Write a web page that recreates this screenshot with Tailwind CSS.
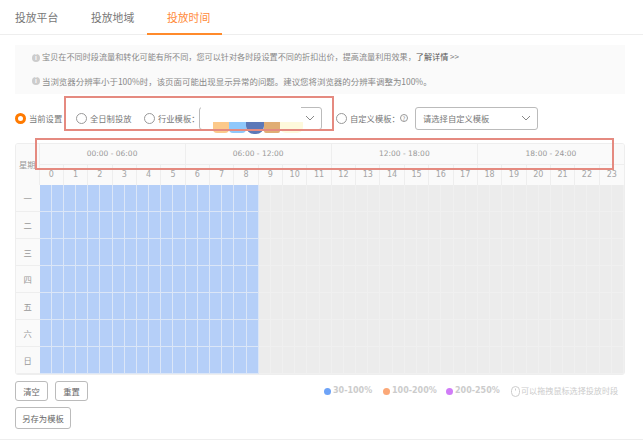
<!DOCTYPE html>
<html lang="zh">

<head>
  <meta charset="utf-8">
  <script src="https://cdn.jsdelivr.net/npm/@tailwindcss/browser@4"></script>
  <title>投放时间</title>
</head>

<body class="bg-white text-[#666] font-['Noto_Sans_CJK_SC','Noto_Sans',sans-serif] text-[8.3px]">
  <div class="relative w-[643px] h-[440px] overflow-hidden border-b border-[#eee] whitespace-nowrap">

    <!-- tabs -->
    <div class="flex h-[35px] pl-[15px] border-b border-[#eee] text-[10.8px] text-[#777]">
      <div class="w-[76px] pt-[9px]">投放平台</div>
      <div class="w-[56px] pt-[9px]">投放地域</div>
      <div class="w-[75px] pl-[20px] pt-[9px] h-[35px] border-b-2 border-[#ff8a2b] text-[#ff8a3a]">投放时间</div>
    </div>

    <!-- notice -->
    <div class="mx-[15px] mt-[10px] h-[49px] w-[610px] bg-[#fafafa] pl-[17px] text-[#888]">
      <div class="flex items-center h-[24px] pt-[1px] gap-[2px]">
        <span class="w-[8px] h-[8px] rounded-full bg-[#ccc] text-white text-[6px] leading-[8px] text-center font-bold">i</span>
        <span class="text-[8.15px]">宝贝在不同时段流量和转化可能有所不同，您可以针对各时段设置不同的折扣出价，提高流量利用效果，<span class="text-[#555]">了解详情</span> &gt;&gt;</span>
      </div>
      <div class="flex items-center h-[24px] gap-[2px]">
        <span class="w-[8px] h-[8px] rounded-full bg-[#ccc] text-white text-[6px] leading-[8px] text-center font-bold">i</span>
        <span class="text-[8.45px]">当浏览器分辨率小于100%时，该页面可能出现显示异常的问题。建议您将浏览器的分辨率调整为100%。</span>
      </div>
    </div>

    <!-- template options -->
    <div class="flex items-center h-[24px] mt-[12px] pl-[15px] text-[#777]">
      <span class="w-[11px] h-[11px] shrink-0 rounded-full border-[3px] border-[#ff7a00] bg-white"></span>
      <span class="ml-[3px] w-[47px]">当前设置</span>
      <span class="w-[11px] h-[11px] shrink-0 rounded-full border border-[#999] bg-white"></span>
      <span class="ml-[3px] w-[43px]">全日制投放</span>
      <span class="ml-[11px] w-[11px] h-[11px] shrink-0 rounded-full border border-[#999] bg-white"></span>
      <span class="ml-[3px] w-[41px]">行业模板：</span>
      <div class="w-[123px] h-[23px] flex items-center justify-end pr-[6px] rounded-[3px] border border-[#bbb] bg-white">
        <svg width="10" height="6" viewBox="0 0 10 6" fill="none" stroke="#888"><path d="M1 1l4 4 4-4" /></svg>
      </div>
      <span class="ml-[14px] w-[11px] h-[11px] shrink-0 rounded-full border border-[#999] bg-white"></span>
      <span class="ml-[3px] w-[50px]">自定义模板：</span>
      <span class="w-[8px] h-[8px] shrink-0 rounded-full border border-[#999] text-[6px] leading-[7px] text-center text-[#888]">?</span>
      <div class="ml-[7px] w-[123px] h-[23px] flex items-center justify-between pl-[7px] pr-[6px] rounded-[3px] border border-[#bbb] bg-white text-[#777]">
        <span>请选择自定义模板</span>
        <svg width="10" height="6" viewBox="0 0 10 6" fill="none" stroke="#888"><path d="M1 1l4 4 4-4" /></svg>
      </div>
    </div>

    <!-- schedule table -->
    <div class="absolute left-[15px] top-[143px] w-[610px] h-[232px] rounded-[3px] border border-[#eee] overflow-hidden">
      <div class="flex h-[41px]">
        <div class="w-[23.5px] shrink-0 bg-[#fafafa] flex items-center justify-center text-[#999] border-r border-[#eee]">星期</div>
        <div class="flex-1 flex flex-col bg-[#fafafa]">
          <div class="grid grid-cols-4 h-[21px] border-b border-[#eee] text-[#999] font-['DejaVu_Sans',sans-serif] text-[7.5px]">
            <div class="flex items-center justify-center border-r border-[#eee]">00:00 - 06:00</div>
            <div class="flex items-center justify-center border-r border-[#eee]">06:00 - 12:00</div>
            <div class="flex items-center justify-center border-r border-[#eee]">12:00 - 18:00</div>
            <div class="flex items-center justify-center">18:00 - 24:00</div>
          </div>
          <div id="hours" class="grid grid-cols-24 flex-1 text-[#a5a5a5] font-['DejaVu_Sans',sans-serif] text-[8px]"></div>
        </div>
      </div>
      <div id="rows" class="flex flex-col"></div>
    </div>

    <!-- colour strip and white smudge over the select, then the red frames -->
    <div class="absolute left-[213px] top-[122px] flex items-start">
      <div class="w-[16px] h-[11px] bg-[#fcc98a] rounded-b-[4px]"></div>
      <div class="w-[17px] h-[11px] bg-[#8fc8fb] rounded-b-[4px]"></div>
      <div class="w-[18px] h-[12px] bg-[#5c78b8] rounded-b-[8px]"></div>
      <div class="w-[16px] h-[11px] bg-[#e0ad74] rounded-b-[2px]"></div>
      <div class="w-[23px] h-[11px] bg-[#fef9dc] rounded-b-[6px]"></div>
    </div>
    <div class="absolute left-[201px] top-[98px] w-[100px] h-[24px] bg-white rounded-[8px]"></div>
    <div class="absolute left-[64px] top-[96px] w-[270px] h-[35px] border-[2px] border-[#e58a80]"></div>
    <div class="absolute left-[35px] top-[138px] w-[579px] h-[32px] border-[2px] border-[#e58a80]"></div>

    <!-- actions -->
    <div class="absolute left-[15px] top-[381px] flex gap-[7px]">
      <button class="w-[33px] h-[20px] rounded-[3px] border border-[#bbb] text-[#666]">清空</button>
      <button class="w-[33px] h-[20px] rounded-[3px] border border-[#bbb] text-[#666]">重置</button>
    </div>
    <button class="absolute left-[15px] top-[407px] w-[56px] h-[22px] rounded-[3px] border border-[#bbb] text-[#666]">另存为模板</button>

    <!-- legend -->
    <div class="absolute left-[324px] top-[384px] h-[14px] flex items-center text-[#ccc]">
      <span class="w-[7px] h-[7px] rounded-full bg-[#6ea3f7]"></span>
      <span class="ml-[2px] w-[50px] font-['DejaVu_Sans',sans-serif] font-bold text-[8px]">30-100%</span>
      <span class="w-[7px] h-[7px] rounded-full bg-[#fba878]"></span>
      <span class="ml-[2px] w-[54px] font-['DejaVu_Sans',sans-serif] font-bold text-[8px]">100-200%</span>
      <span class="w-[7px] h-[7px] rounded-full bg-[#d07cf7]"></span>
      <span class="ml-[2px] w-[56px] font-['DejaVu_Sans',sans-serif] font-bold text-[8px]">200-250%</span>
      <svg width="9" height="11" viewBox="0 0 9 11" fill="none" stroke="#ccc"><rect x=".5" y=".5" width="8" height="10" rx="4" /><path d="M4.5 2.5v2" /></svg>
      <span class="ml-[1px] text-[8.1px]">可以拖拽鼠标选择投放时段</span>
    </div>
  </div>

  <script>
    var hours = ''
    for (var h = 0; h < 24; h++) {
      hours += '<div class="flex items-center justify-center border-r border-[#eee] last:border-r-0">' + h + '</div>'
    }
    document.getElementById('hours').innerHTML = hours

    var days = ['一', '二', '三', '四', '五', '六', '日']
    var rows = ''
    days.forEach(function (day) {
      var cells = ''
      for (var i = 0; i < 48; i++) {
        cells += i < 18
          ? '<div class="bg-[#b5cff8] border-r border-b border-[#dbe6f7]"></div>'
          : '<div class="bg-[#ececec] border-r border-b border-[#f0f0f0]"></div>'
      }
      rows += '<div class="flex h-[27px]"><div class="w-[23.5px] shrink-0 bg-[#fafafa] flex items-center justify-center text-[#999] border-b border-[#eee]">' + day + '</div>'
        + '<div class="flex-1 grid grid-cols-48">' + cells + '</div></div>'
    })
    document.getElementById('rows').innerHTML = rows
  </script>
</body>

</html>
